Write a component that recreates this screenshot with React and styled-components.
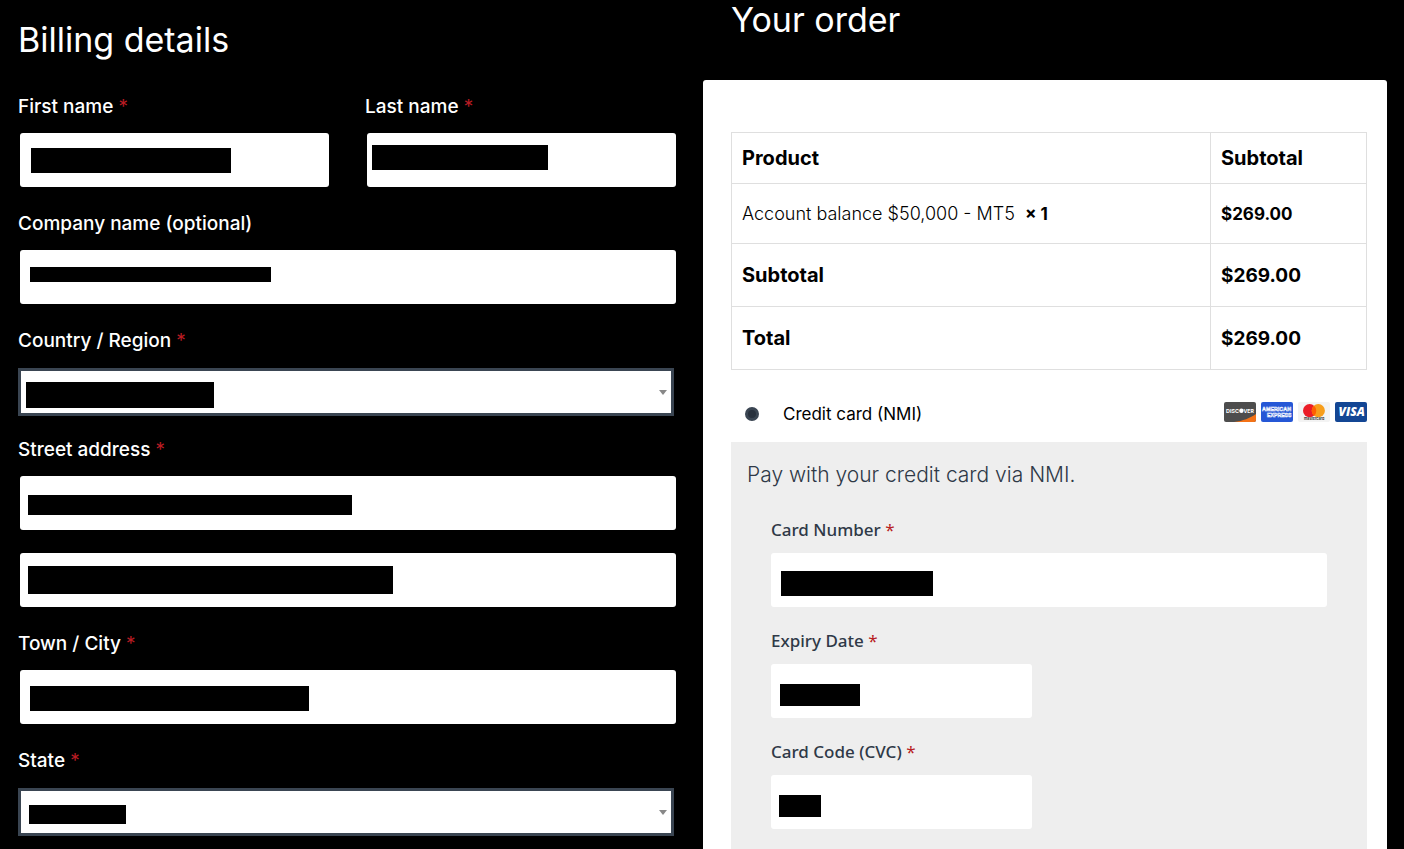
import React from 'react';
import styled, { createGlobalStyle } from 'styled-components';

const dark = '#2f3947';
const slate = '#3a4552';
const panel = '#eee';
const line = '#dfdfdf';
const danger = '#b81c23';

const bodyFont = `Inter, 'Open Sans', sans-serif`;
const cardFont = `'Noto Sans', 'Open Sans', sans-serif`;

const GlobalStyle = createGlobalStyle`
  * {
    box-sizing: border-box;
  }

  body {
    margin: 0;
    background: #000;
    font-family: ${bodyFont};
  }
`;

const Page = styled.form`
  display: grid;
  grid-template-columns: 658fr 684fr;
  column-gap: 27px;
  min-height: 100vh;
  padding: 0 17px 0 18px;
`;

const Billing = styled.section`
  padding-top: 20px;
`;

const Order = styled.section`
  display: flex;
  flex-direction: column;
`;

const Title = styled.h3`
  margin: 0 0 ${props => props.$space}px;
  padding-left: ${props => (props.$indent ? 28 : 0)}px;
  color: #fff;
  font-size: 34px;
  font-weight: 400;
  line-height: 40px;
`;

const NameRow = styled.div`
  display: grid;
  grid-template-columns: 1fr 1fr;
  column-gap: 36px;
`;

const FieldWrapper = styled.div`
  margin-bottom: ${props => (props.$select ? 20 : 23)}px;
`;

const Label = styled.label`
  display: block;
  margin-bottom: ${props => (props.$select ? 13 : 12)}px;
  color: #fff;
  font-size: 19px;
  font-weight: 500;
  line-height: 28px;
`;

const Required = styled.span`
  color: ${danger};
  font-weight: 400;
`;

const Control = styled.div`
  position: relative;
  margin: ${props => (props.$select ? '0 2px 0 0' : '0 0 0 2px')};
`;

const Input = styled.input`
  display: block;
  width: 100%;
  height: 54px;
  padding: 0 10px;
  border: 0;
  border-radius: 3px;
  background: #fff;
  font-size: 18px;
`;

const Select = styled.select`
  display: block;
  width: 100%;
  height: 48px;
  padding: 0 24px 0 8px;
  border: 3px solid ${slate};
  border-radius: 0;
  background: #fff;
  appearance: none;
  font-size: 18px;
`;

const Arrow = styled.span`
  position: absolute;
  top: 22px;
  right: 7px;
  border-style: solid;
  border-width: 5px 4px 0;
  border-color: #888 transparent transparent;
  pointer-events: none;
`;

// black bar that covers a private value
const Mask = styled.span`
  position: absolute;
  left: ${props => props.$box[0]}px;
  top: ${props => props.$box[1]}px;
  width: ${props => props.$box[2]}px;
  height: ${props => props.$box[3]}px;
  background: #000;
  pointer-events: none;
`;

const OrderCard = styled.div`
  display: flex;
  flex: 1;
  flex-direction: column;
  padding: 52px 20px 0 28px;
  border-radius: 3px 3px 0 0;
  background: #fff;
`;

const Table = styled.table`
  width: 100%;
  border-collapse: collapse;
  table-layout: fixed;
  color: #000;
  text-align: left;
`;

const Row = styled.tr`
  height: ${props => props.$height}px;
`;

const Head = styled.th`
  width: ${props => (props.$narrow ? '156px' : 'auto')};
  padding: 0 10px;
  border: 1px solid ${line};
  font-size: 20px;
  font-weight: 700;
`;

const Cell = styled.td`
  padding: 0 10px;
  border: 1px solid ${line};
  font-size: ${props => (props.$large ? 19 : props.$bold ? 17 : 18)}px;
  font-weight: ${props => (props.$bold ? 700 : 300)};
`;

const Quantity = styled.strong`
  margin-left: 5px;
  font-size: 17px;
  font-weight: 700;
`;

const Method = styled.div`
  display: flex;
  align-items: center;
  height: 56px;
  margin-top: 16px;
  padding-left: 14px;
`;

const Radio = styled.input`
  width: 14px;
  height: 14px;
  margin: 0 24px 0 0;
  border: 3px solid ${slate};
  border-radius: 50%;
  background: #28313d;
  appearance: none;
`;

const MethodLabel = styled.label`
  flex: 1;
  color: #000;
  font-size: 17px;
`;

const Brands = styled.div`
  display: flex;
  gap: 5px;
  padding-bottom: 4px;
`;

const Payment = styled.div`
  flex: 1;
  padding: 18px 40px 0;
  background: ${panel};
`;

const Intro = styled.p`
  margin: 0 0 29px -24px;
  color: ${dark};
  font-size: 21px;
  font-weight: 300;
  line-height: 30px;
`;

const CardField = styled.div`
  width: ${props => (props.$short ? '47%' : '100%')};
  padding-bottom: 23px;
`;

const CardLabel = styled.label`
  display: block;
  margin-bottom: 12px;
  color: ${dark};
  font-family: ${cardFont};
  font-size: 17px;
  font-weight: 500;
  line-height: 22px;
`;

const CardControl = styled.div`
  position: relative;
`;

const Field = ({ id, label, mask }) => (
  <FieldWrapper>
    {label && (
      <Label htmlFor={id}>
        {label} {id !== 'company' && <Required>*</Required>}
      </Label>
    )}
    <Control>
      <Input id={id} type="text" aria-label={label ? undefined : 'Street address line 2'} />
      <Mask $box={mask} />
    </Control>
  </FieldWrapper>
);

const SelectField = ({ id, label, mask }) => (
  <FieldWrapper $select>
    <Label htmlFor={id} $select>
      {label} <Required>*</Required>
    </Label>
    <Control $select>
      <Select id={id}>
        <option />
      </Select>
      <Arrow />
      <Mask $box={mask} />
    </Control>
  </FieldWrapper>
);

const PaymentField = ({ id, label, mask, short }) => (
  <CardField $short={short}>
    <CardLabel htmlFor={id}>
      {label} <Required>*</Required>
    </CardLabel>
    <CardControl>
      <Input id={id} type="text" />
      <Mask $box={mask} />
    </CardControl>
  </CardField>
);

const Discover = () => (
  <svg width="32" height="20" viewBox="0 0 32 20" role="img" aria-label="Discover">
    <rect width="32" height="20" rx="2" fill="#4d4d4d" />
    <path d="M32 12v6a2 2 0 0 1-2 2H10c9-1 16-4 22-8z" fill="#f47216" />
    <text x="2" y="10.6" fill="#fff" fontFamily="Inter" fontSize="5.4" fontWeight="700">DISC</text>
    <circle cx="17.4" cy="8.7" r="2.2" fill="#fff" />
    <text x="19.4" y="10.6" fill="#fff" fontFamily="Inter" fontSize="5.2" fontWeight="700">VER</text>
  </svg>
);

const Amex = () => (
  <svg width="32" height="20" viewBox="0 0 32 20" role="img" aria-label="American Express">
    <rect width="32" height="20" rx="2" fill="#2557d6" />
    <g fill="#2557d6" stroke="#fff" strokeWidth="0.5" fontFamily="Liberation Sans" fontWeight="700">
      <text x="1" y="8.8" fontSize="5.4">AMERICAN</text>
      <text x="6" y="15.2" fontSize="5.2">EXPRESS</text>
    </g>
  </svg>
);

const Mastercard = () => (
  <svg width="32" height="20" viewBox="0 0 32 20" role="img" aria-label="Mastercard">
    <rect width="32" height="20" rx="2" fill="#f3f3f3" />
    <circle cx="11.6" cy="8.7" r="6.6" fill="#eb1c26" />
    <circle cx="20.3" cy="8.7" r="6.6" fill="#f79e1b" />
    <path d="M16 3.7a6.6 6.6 0 0 1 0 10 6.6 6.6 0 0 1 0-10z" fill="#ff5f00" />
    <text x="6" y="18.2" fill="#222" fontFamily="Inter" fontSize="3.7" fontWeight="600">mastercard</text>
  </svg>
);

const Visa = () => (
  <svg width="32" height="20" viewBox="0 0 32 20" role="img" aria-label="Visa">
    <rect width="32" height="20" rx="2" fill="#134694" />
    <text x="3.5" y="14" fill="#fff" fontFamily="Open Sans" fontSize="12" fontStyle="italic" fontWeight="800">VISA</text>
  </svg>
);

export default function App() {
  return (
    <>
      <GlobalStyle />
      <Page>
        <Billing>
          <Title $space={33}>Billing details</Title>
          <NameRow>
            <Field id="first-name" label="First name" mask={[11, 15, 200, 25]} />
            <Field id="last-name" label="Last name" mask={[5, 12, 176, 25]} />
          </NameRow>
          <Field id="company" label="Company name (optional)" mask={[10, 17, 241, 15]} />
          <SelectField id="country" label="Country / Region" mask={[8, 14, 188, 26]} />
          <Field id="street" label="Street address" mask={[8, 19, 324, 20]} />
          <Field id="street-2" mask={[8, 13, 365, 28]} />
          <Field id="city" label="Town / City" mask={[10, 16, 279, 25]} />
          <SelectField id="state" label="State" mask={[11, 17, 97, 19]} />
        </Billing>
        <Order>
          <Title $space={40} $indent>Your order</Title>
          <OrderCard>
            <Table>
              <thead>
                <Row $height={51}>
                  <Head>Product</Head>
                  <Head $narrow>Subtotal</Head>
                </Row>
              </thead>
              <tbody>
                <Row $height={60}>
                  <Cell>
                    Account balance $50,000 - MT5 <Quantity>× 1</Quantity>
                  </Cell>
                  <Cell $bold>$269.00</Cell>
                </Row>
              </tbody>
              <tfoot>
                <Row $height={63}>
                  <Head>Subtotal</Head>
                  <Cell $bold $large>$269.00</Cell>
                </Row>
                <Row $height={63}>
                  <Head>Total</Head>
                  <Cell $bold $large>$269.00</Cell>
                </Row>
              </tfoot>
            </Table>
            <Method>
              <Radio id="nmi" type="radio" name="payment" defaultChecked />
              <MethodLabel htmlFor="nmi">Credit card (NMI)</MethodLabel>
              <Brands>
                <Discover />
                <Amex />
                <Mastercard />
                <Visa />
              </Brands>
            </Method>
            <Payment>
              <Intro>Pay with your credit card via NMI.</Intro>
              <PaymentField id="card-number" label="Card Number" mask={[10, 18, 152, 25]} />
              <PaymentField id="expiry" label="Expiry Date" mask={[9, 20, 80, 22]} short />
              <PaymentField id="cvc" label="Card Code (CVC)" mask={[8, 20, 42, 22]} short />
            </Payment>
          </OrderCard>
        </Order>
      </Page>
    </>
  );
}
